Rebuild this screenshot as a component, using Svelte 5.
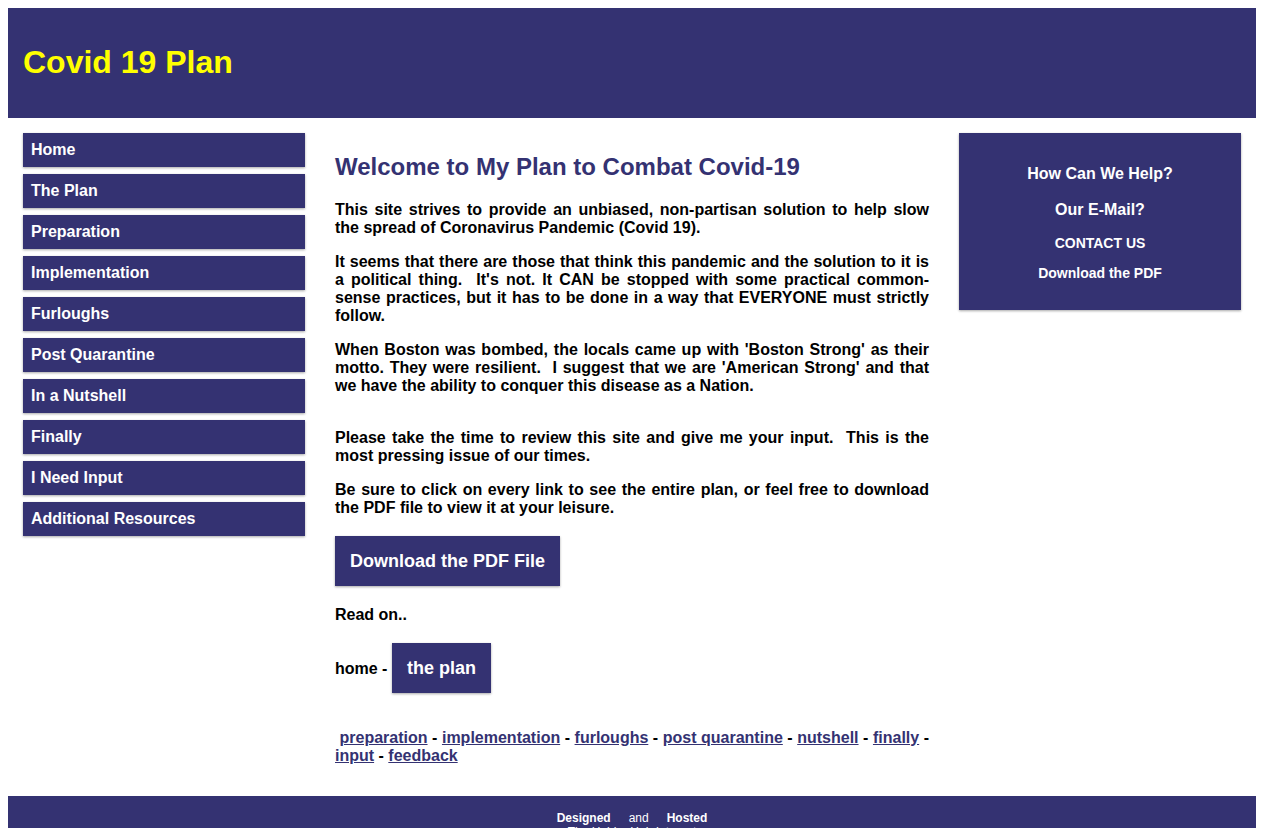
<script>
  const menu = [
    'Home',
    'The Plan',
    'Preparation',
    'Implementation',
    'Furloughs',
    'Post Quarantine',
    'In a Nutshell',
    'Finally',
    'I Need Input',
    'Additional Resources'
  ];
</script>

<div class="page">
  <header>
    <h1>Covid 19 Plan</h1>
  </header>

  <div class="row">
    <nav aria-label="Main">
      <ul>
        {#each menu as item}
          <li><a href="#top">{item}</a></li>
        {/each}
      </ul>
    </nav>

    <main>
      <h2>Welcome to My Plan to Combat Covid-19</h2>
      <p>This site strives to provide an unbiased, non-partisan solution to help slow the spread of Coronavirus Pandemic (Covid 19).</p>
      <p>It seems that there are those that think this pandemic and the solution to it is a political thing.&nbsp; It's not. It CAN be stopped with some practical common-sense practices, but it has to be done in a way that EVERYONE must strictly follow.</p>
      <p>When Boston was bombed, the locals came up with 'Boston Strong' as their motto. They were resilient.&nbsp; I suggest that we are 'American Strong' and that we have the ability to conquer this disease as a Nation.<br />&nbsp;</p>
      <p>Please take the time to review this site and give me your input.&nbsp; This is the most pressing issue of our times.</p>
      <p>Be sure to click on every link to see the entire plan, or feel free to download the PDF file to view it at your leisure.</p>
      <p class="action"><a class="button" href="#pdf">Download the PDF File</a></p>
      <p>Read on..</p>
      <p class="action">home - <a class="button" href="#plan">the plan</a></p>
      <p class="links">&nbsp;<a href="#preparation">preparation</a> - <a href="#implementation">implementation</a> - <a href="#furloughs">furloughs</a> - <a href="#quarantine">post quarantine</a> - <a href="#nutshell">nutshell</a> - <a href="#finally">finally</a> - <a href="#input">input</a> - <a href="#feedback">feedback</a></p>
    </main>

    <div class="side">
      <aside>
        <h3>How Can We Help?</h3>
        <h3>Our E-Mail?</h3>
        <p><a href="#contact">CONTACT US</a></p>
        <p><a href="#pdf">Download the PDF</a></p>
      </aside>
    </div>
  </div>

  <footer>
    <div class="credit"><a href="#designed">Designed</a><span>and</span><a href="#hosted">Hosted</a></div>
    <div>The Hubba Hub Internet</div>
  </footer>
</div>

<style>
  :global(html) {
    scrollbar-width: none;
  }

  :global(body) {
    margin: 0;
    background: #fff;
  }

  .page {
    padding: 8px;
    font-family: "Liberation Sans", Arial, sans-serif;
    font-size: 16px;
    line-height: 18px;
    color: #000;
  }

  .page * {
    box-sizing: border-box;
  }

  header {
    padding: 15px;
    background: #343272;
    color: #ff0;
  }

  h1 {
    margin: 21px 0 22px;
    font-size: 32px;
    line-height: 37px;
  }

  .row {
    display: grid;
    grid-template-columns: 1fr 2fr 1fr;
    align-items: start;
  }

  nav,
  main,
  .side {
    padding: 15px;
    min-width: 0;
  }

  ul {
    display: grid;
    gap: 7px;
    margin: 0;
    padding: 0;
    list-style: none;
  }

  li,
  aside,
  .button {
    background: #343272;
    color: #fff;
    box-shadow: 0 1px 3px rgba(0, 0, 0, 0.12), 0 1px 2px rgba(0, 0, 0, 0.24);
  }

  li a {
    display: block;
    padding: 8px;
    color: #fff;
    font-weight: bold;
    text-decoration: none;
  }

  main {
    font-weight: bold;
    text-align: justify;
  }

  h2 {
    margin: 20px 0;
    color: #343272;
    font-size: 24px;
    line-height: 28px;
    text-align: left;
  }

  main p {
    margin: 16px 0;
  }

  main .action {
    margin: 19px 0 20px;
  }

  .button {
    display: inline-block;
    padding: 15px;
    font-size: 18px;
    line-height: 20px;
    text-decoration: none;
  }

  .links {
    padding-top: 16px;
  }

  .links a {
    color: #343272;
  }

  aside {
    padding: 14px 15px 15px;
    font-size: 14px;
    line-height: 16px;
    font-weight: bold;
    text-align: center;
  }

  h3 {
    margin: 17px 0 16px;
    font-size: 16px;
    line-height: 19px;
  }

  aside p {
    margin: 14px 0;
  }

  aside a {
    color: #fff;
    text-decoration: none;
  }

  footer {
    padding: 15px;
    background: #343272;
    color: #fff;
    font-size: 12px;
    line-height: 14px;
    text-align: center;
  }

  .credit {
    display: flex;
    justify-content: center;
    gap: 18px;
  }

  footer a {
    color: #fff;
    font-weight: bold;
    text-decoration: none;
  }
</style>
